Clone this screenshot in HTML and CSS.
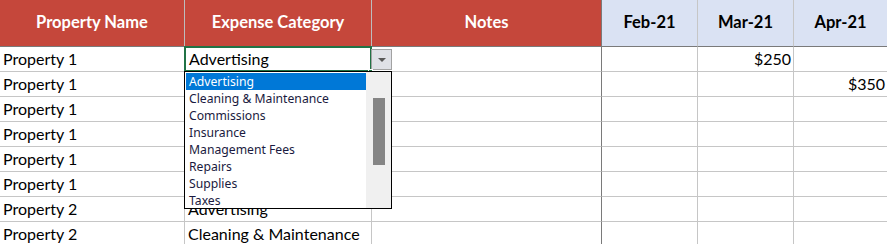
FILE: index.html
```html
<!DOCTYPE html>
<html lang="en">
<head>
    <meta charset="UTF-8">
    <title>Expense Tracker</title>
    <link rel="stylesheet" href="styles.css">
</head>
<body>
    <div class="sheet">
        <div class="grid">
            <div class="cell head red">Property Name</div>
            <div class="cell head red">Expense Category</div>
            <div class="cell head red notes">Notes</div>
            <div class="cell head blue">Feb-21</div>
            <div class="cell head blue">Mar-21</div>
            <div class="cell head blue">Apr-21</div>

            <div class="cell">Property 1</div>
            <div class="cell active">Advertising</div>
            <div class="cell notes"></div>
            <div class="cell"></div>
            <div class="cell num">$250</div>
            <div class="cell"></div>

            <div class="cell">Property 1</div>
            <div class="cell"></div>
            <div class="cell notes"></div>
            <div class="cell"></div>
            <div class="cell"></div>
            <div class="cell num">$350</div>

            <div class="cell">Property 1</div>
            <div class="cell"></div>
            <div class="cell notes"></div>
            <div class="cell"></div>
            <div class="cell"></div>
            <div class="cell"></div>

            <div class="cell">Property 1</div>
            <div class="cell"></div>
            <div class="cell notes"></div>
            <div class="cell"></div>
            <div class="cell"></div>
            <div class="cell"></div>

            <div class="cell">Property 1</div>
            <div class="cell"></div>
            <div class="cell notes"></div>
            <div class="cell"></div>
            <div class="cell"></div>
            <div class="cell"></div>

            <div class="cell">Property 1</div>
            <div class="cell"></div>
            <div class="cell notes"></div>
            <div class="cell"></div>
            <div class="cell"></div>
            <div class="cell"></div>

            <div class="cell">Property 2</div>
            <div class="cell">Advertising</div>
            <div class="cell notes"></div>
            <div class="cell"></div>
            <div class="cell"></div>
            <div class="cell"></div>

            <div class="cell">Property 2</div>
            <div class="cell">Cleaning &amp; Maintenance</div>
            <div class="cell notes"></div>
            <div class="cell"></div>
            <div class="cell"></div>
            <div class="cell"></div>
        </div>

        <div class="dd-button">
            <svg viewBox="0 0 8 4" width="8" height="4"><path d="M0 0h8L4 4z" fill="#595959"/></svg>
        </div>
        <span class="fill-handle"></span>

        <div class="dd-list">
            <ul class="dd-items">
                <li class="selected">Advertising</li>
                <li>Cleaning &amp; Maintenance</li>
                <li>Commissions</li>
                <li>Insurance</li>
                <li>Management Fees</li>
                <li>Repairs</li>
                <li>Supplies</li>
                <li>Taxes</li>
            </ul>
            <div class="dd-scroll">
                <div class="dd-thumb"></div>
            </div>
        </div>
    </div>
</body>
</html>
```

FILE: styles.css
```css
* {
    margin: 0;
    padding: 0;
    box-sizing: border-box;
}

body {
    font-family: Lato, "Liberation Sans", sans-serif;
    color: #000;
    background-color: #fff;
    overflow: hidden;
}

.sheet {
    position: relative;
    width: 887px;
    height: 244px;
    overflow: hidden;
}

.grid {
    display: grid;
    grid-template-columns: 185px 187px 230px 96px 96px 94px;
    grid-template-rows: 47px repeat(8, 25px);
}

.cell {
    font-size: 16px;
    line-height: 24px;
    padding: 0 3px;
    border-right: 1px solid #c6c6c6;
    border-bottom: 1px solid #c6c6c6;
    white-space: nowrap;
    overflow: hidden;
}

.cell.notes {
    border-right-color: #7a7a7a;
}

.cell.num {
    text-align: right;
    padding-right: 2px;
}

.head {
    font-weight: 700;
    font-size: 16.5px;
    line-height: 44px;
    text-align: center;
    border-bottom: 1px solid #7a7a7a;
}

.head.red {
    background-color: #c5473b;
    color: #fff;
    border-right-color: #bdbdbd;
}

.head.blue {
    background-color: #dae2f3;
    color: #000;
}

.head.red.notes {
    border-right-color: #7a7a7a;
}

.cell.active {
    border: 2px solid #217346;
    margin: -1px 0 0 -1px;
    padding-left: 3px;
    line-height: 22px;
}

.fill-handle {
    position: absolute;
    left: 368px;
    top: 69px;
    width: 5px;
    height: 5px;
    background-color: #217346;
    border: 1px solid #fff;
}

.dd-button {
    position: absolute;
    left: 371px;
    top: 49px;
    width: 21px;
    height: 21px;
    background-color: #dfe1e7;
    border: 1px solid #a2a2a2;
    display: flex;
    align-items: center;
    justify-content: center;
}

.dd-list {
    position: absolute;
    left: 184px;
    top: 71px;
    width: 208px;
    height: 138px;
    background-color: #fff;
    border: 1px solid #000;
    display: flex;
}

.dd-items {
    list-style: none;
    flex: 1;
    padding: 1px 0 0 1px;
}

.dd-items li {
    font-family: "Noto Sans", "Open Sans", sans-serif;
    font-size: 12.2px;
    line-height: 17px;
    height: 17px;
    padding-left: 3px;
    color: #1a1a40;
    white-space: nowrap;
}

.dd-items li.selected {
    background-color: #0078d7;
    color: #fff;
}

.dd-scroll {
    width: 25px;
    background-color: #f0f0f0;
    padding: 26px 6px 0 7px;
}

.dd-thumb {
    height: 67px;
    background-color: #858585;
}
```
